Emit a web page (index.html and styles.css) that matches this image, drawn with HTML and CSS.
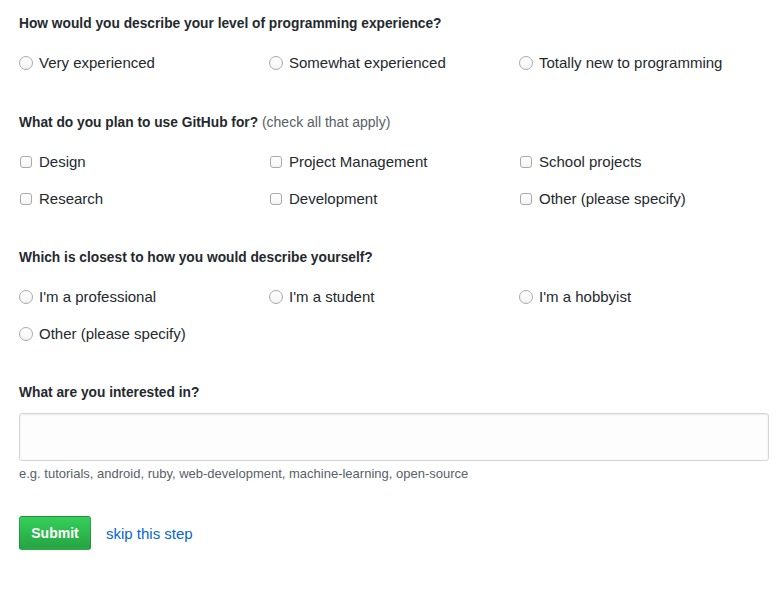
FILE: index.html
```html
<!DOCTYPE html>
<html>
<head>
<meta charset="utf-8">
<link rel="stylesheet" href="styles.css">
</head>
<body>
<form class="survey">
  <section class="group">
    <h2 class="q">How would you describe your level of programming experience?</h2>
    <div class="options">
      <label class="opt"><span class="radio"></span>Very experienced</label>
      <label class="opt"><span class="radio"></span>Somewhat experienced</label>
      <label class="opt"><span class="radio"></span>Totally new to programming</label>
    </div>
  </section>
  <section class="group">
    <h2 class="q">What do you plan to use GitHub for? <span class="note">(check all that apply)</span></h2>
    <div class="options">
      <label class="opt"><span class="check"></span>Design</label>
      <label class="opt"><span class="check"></span>Project Management</label>
      <label class="opt"><span class="check"></span>School projects</label>
      <label class="opt"><span class="check"></span>Research</label>
      <label class="opt"><span class="check"></span>Development</label>
      <label class="opt"><span class="check"></span>Other (please specify)</label>
    </div>
  </section>
  <section class="group">
    <h2 class="q">Which is closest to how you would describe yourself?</h2>
    <div class="options">
      <label class="opt"><span class="radio"></span>I'm a professional</label>
      <label class="opt"><span class="radio"></span>I'm a student</label>
      <label class="opt"><span class="radio"></span>I'm a hobbyist</label>
      <label class="opt"><span class="radio"></span>Other (please specify)</label>
    </div>
  </section>
  <section class="group last">
    <h2 class="q q-tight">What are you interested in?</h2>
    <div class="field"></div>
    <p class="help">e.g. tutorials, android, ruby, web-development, machine-learning, open-source</p>
  </section>
  <div class="actions">
    <button type="button" class="btn">Submit</button>
    <a class="skip" href="#">skip this step</a>
  </div>
</form>
</body>
</html>
```
FILE: styles.css
```css
* { box-sizing: border-box; }
html, body { margin: 0; background: #fff; }
body {
  font-family: "Liberation Sans", Arial, sans-serif;
  font-size: 14px;
  color: #24292e;
}
.survey {
  padding: 14px 8px 0 19px;
  width: 777px;
}
.group { margin-bottom: 39px; }
.group.last { margin-bottom: 0; }
.q {
  margin: 0 0 19px;
  font-size: 13.75px;
  line-height: 20px;
  font-weight: bold;
}
.q-tight { margin-bottom: 10px; }
.note {
  font-weight: normal;
  font-size: 14px;
  color: #586069;
}
.options {
  display: grid;
  grid-template-columns: 250px 250px 250px;
  row-gap: 17px;
}
.opt {
  display: flex;
  align-items: center;
  height: 20px;
  line-height: 20px;
  font-size: 15px;
  color: #24292e;
}
.radio {
  width: 14px;
  height: 14px;
  border: 1px solid #aaa;
  border-radius: 50%;
  margin-right: 6px;
  flex: none;
  background: linear-gradient(#fff, #f4f4f4);
}
.check {
  width: 12px;
  height: 12px;
  border: 1px solid #aaa;
  border-radius: 3px;
  margin-left: 1px;
  margin-right: 7px;
  flex: none;
  background: linear-gradient(#fff, #f4f4f4);
}
.field {
  width: 750px;
  height: 48px;
  border: 1px solid #d1d5da;
  border-radius: 3px;
  background: #fdfdfd;
  box-shadow: inset 0 1px 2px rgba(27,31,35,0.075);
}
.help {
  margin: 4px 0 0;
  font-size: 13px;
  line-height: 18px;
  color: #586069;
}
.actions {
  margin-top: 33px;
  display: flex;
  align-items: center;
  gap: 15px;
}
.btn {
  height: 34px;
  width: 72px;
  padding: 0;
  border: 1px solid rgba(27,31,35,0.2);
  border-radius: 3px;
  background: linear-gradient(-180deg, #34d058 0%, #28a745 90%);
  color: #fff;
  font-family: "Liberation Sans", Arial, sans-serif;
  font-size: 14px;
  font-weight: bold;
  line-height: 20px;
}
.skip {
  color: #0366d6;
  text-decoration: none;
  font-size: 15px;
}
```
